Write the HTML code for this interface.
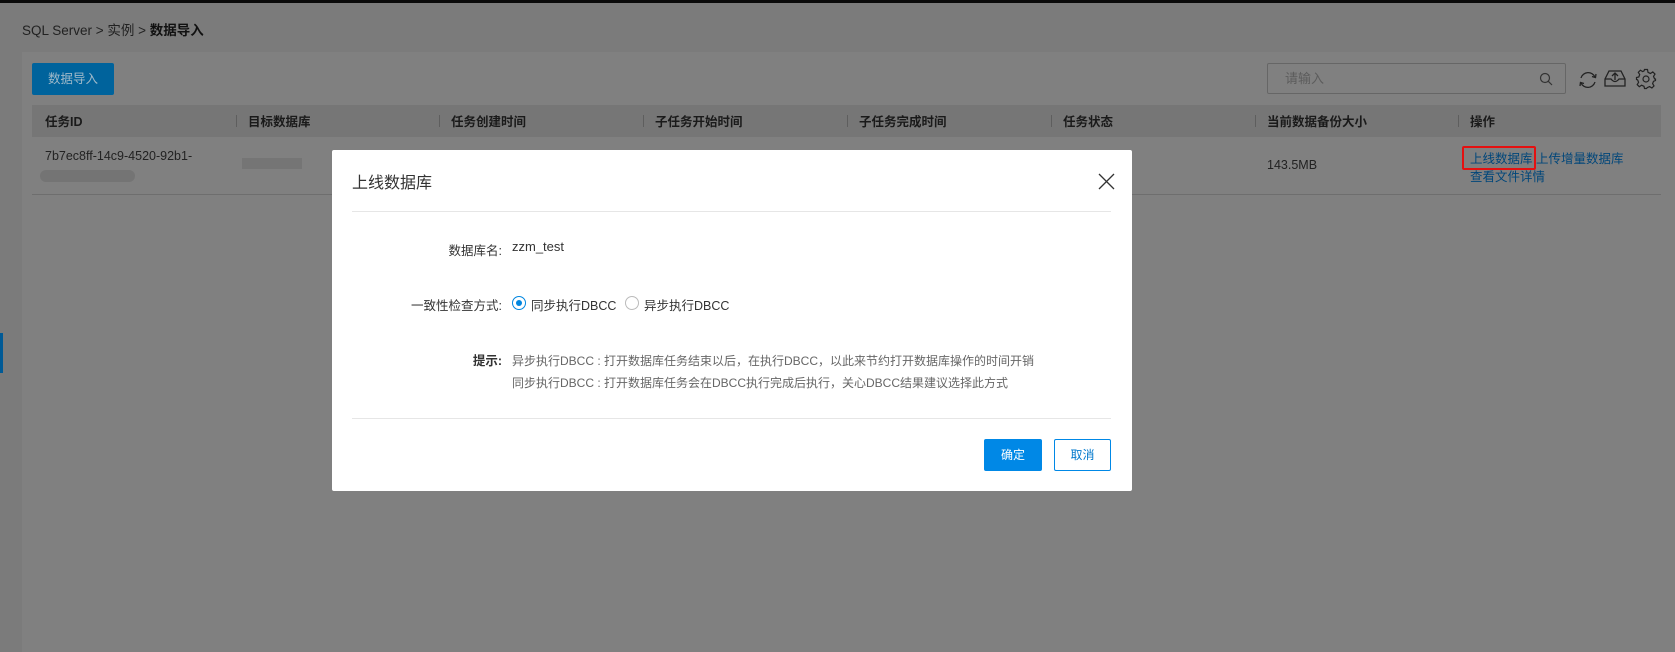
<!DOCTYPE html>
<html><head><meta charset="utf-8"><style>
*{margin:0;padding:0;box-sizing:border-box}
body{width:1675px;height:652px;overflow:hidden;background:#7b7b7b;font-family:"Liberation Sans","Noto Sans CJK SC",sans-serif;font-size:12px;color:#1e1e1e;position:relative}
.abs{position:absolute}
.top{left:0;top:0;width:1675px;height:3px;background:#0a0a0a}
.panel{left:22px;top:52px;width:1653px;height:600px;background:#808080}
.th{top:105px;left:32px;width:1629px;height:32px;background:#767676}
.th span{position:absolute;top:6px;font-weight:bold;font-size:12.5px;color:#1a1a1a}
.sep{position:absolute;top:10px;width:1px;height:12px;background:#5e5e5e}
.rowb{left:32px;top:194px;width:1629px;height:1px;background:#6e6e6e}
a{color:#00467a;text-decoration:none}
.modal{left:332px;top:150px;width:800px;height:341px;background:#fff;border-radius:2px}
.lbl{position:absolute;text-align:right;width:200px;left:-30px;color:#333;font-size:12.5px}
</style></head><body>
<div class="abs top"></div>
<div class="abs" style="left:0;top:333px;width:3px;height:40px;background:#005a96"></div>
<div class="abs" style="left:22px;top:19px;font-size:13.5px;color:#222">SQL Server &gt; 实例 &gt; <b style="color:#111">数据导入</b></div>
<div class="abs panel"></div>
<div class="abs" style="left:32px;top:63px;width:82px;height:32px;background:#00639c;border-radius:2px;color:#9fb9c9;font-size:12.5px;line-height:32px;text-align:center">数据导入</div>
<div class="abs" style="left:1267px;top:63px;width:299px;height:31px;border:1px solid #666;border-radius:2px;color:#5c5c5c;font-size:13px;line-height:29px;padding-left:17px">请输入
<svg class="abs" style="right:12px;top:8px" width="14" height="14" viewBox="0 0 14 14"><circle cx="6" cy="6" r="4.5" fill="none" stroke="#333" stroke-width="1.2"/><path d="M9.3 9.3L13 13" stroke="#333" stroke-width="1.2"/></svg></div>
<svg class="abs" style="left:1577px;top:69px" width="22" height="22" viewBox="0 0 22 22" fill="none" stroke="#222" stroke-width="1.3"><path d="M4 9A7.5 7.5 0 0 1 18 8"/><path d="M18 13A7.5 7.5 0 0 1 4 14"/><path d="M15 7.5L18.5 8.5L19 5"/><path d="M7 14.5L3.5 13.5L3 17"/></svg>
<svg class="abs" style="left:1603px;top:67px" width="24" height="22" viewBox="0 0 24 22" fill="none" stroke="#222" stroke-width="1.3"><path d="M2 12L6 4H18L22 12V19H2Z"/><path d="M2 12H8Q12 17 16 12H22"/><path d="M12 13V6M9 9L12 6L15 9"/></svg>
<svg class="abs" style="left:1635px;top:68px" width="22" height="22" viewBox="0 0 22 22" fill="none" stroke="#222" stroke-width="1.2"><circle cx="11" cy="11" r="3"/><path d="M9.5 1.5H12.5L13 4.3L15.5 5.5L17.8 3.9L20 6.1L18.5 8.4L19.6 10.9L20.5 11L20.5 12.5L18.5 13.3L17.6 15.6L19 17.9L16.9 20L14.6 18.6L12.3 19.6L11.5 20.5H9.5L9 18.3L6.6 17.2L4.3 18.7L2.2 16.6L3.6 14.3L2.6 11.9L1.5 11.5V9.5L3.8 9L4.7 6.6L3.3 4.3L5.4 2.2L7.7 3.6L9 3Z"/></svg>
<div class="abs th">
<span style="left:13px">任务ID</span>
<i class="sep" style="left:204px"></i><span style="left:216px">目标数据库</span>
<i class="sep" style="left:407px"></i><span style="left:419px">任务创建时间</span>
<i class="sep" style="left:611px"></i><span style="left:623px">子任务开始时间</span>
<i class="sep" style="left:815px"></i><span style="left:827px">子任务完成时间</span>
<i class="sep" style="left:1019px"></i><span style="left:1031px">任务状态</span>
<i class="sep" style="left:1223px"></i><span style="left:1235px">当前数据备份大小</span>
<i class="sep" style="left:1426px"></i><span style="left:1438px">操作</span>
</div>
<div class="abs" style="left:45px;top:149px;font-size:12.5px;color:#222">7b7ec8ff-14c9-4520-92b1-</div>
<div class="abs" style="left:40px;top:170px;width:95px;height:12px;background:#747474;border-radius:6px"></div>
<div class="abs" style="left:242px;top:158px;width:60px;height:11px;background:#757575"></div>
<div class="abs" style="left:1267px;top:158px;font-size:12.5px;color:#222">143.5MB</div>
<div class="abs" style="left:1462px;top:146px;width:74px;height:24px;border:2px solid #e51010;border-radius:2px"></div>
<div class="abs" style="left:1470px;top:150px;font-size:12.5px;line-height:18px"><a>上线数据库</a> <a>上传增量数据库</a><br><a>查看文件详情</a></div>
<div class="abs rowb"></div>

<div class="abs modal">
<div class="abs" style="left:20px;top:19px;font-size:16px;color:#333">上线数据库</div>
<svg class="abs" style="left:766px;top:23px" width="17" height="17" viewBox="0 0 17 17"><path d="M1 1L16 16M16 1L1 16" stroke="#333" stroke-width="1.3"/></svg>
<div class="abs" style="left:20px;top:61px;width:759px;height:1px;background:#e6e6e6"></div>
<div class="lbl" style="top:90px">数据库名:</div>
<div class="abs" style="left:180px;top:89px;color:#333;font-size:13px">zzm_test</div>
<div class="lbl" style="top:145px">一致性检查方式:</div>
<div class="abs" style="left:180px;top:146px;width:14px;height:14px;border:1px solid #0086e0;border-radius:50%"><div style="margin:3px;width:6px;height:6px;border-radius:50%;background:#0086e0"></div></div>
<div class="abs" style="left:199px;top:145px;color:#333;font-size:12.5px">同步执行DBCC</div>
<div class="abs" style="left:293px;top:146px;width:14px;height:14px;border:1px solid #bbb;border-radius:50%"></div>
<div class="abs" style="left:312px;top:145px;color:#333;font-size:12.5px">异步执行DBCC</div>
<div class="lbl" style="top:200px;font-weight:bold">提示:</div>
<div class="abs" style="left:180px;top:200px;color:#666;line-height:22px;font-size:12px">异步执行DBCC : 打开数据库任务结束以后，在执行DBCC，以此来节约打开数据库操作的时间开销<br>同步执行DBCC : 打开数据库任务会在DBCC执行完成后执行，关心DBCC结果建议选择此方式</div>
<div class="abs" style="left:20px;top:268px;width:759px;height:1px;background:#e6e6e6"></div>
<div class="abs" style="left:652px;top:289px;width:58px;height:32px;background:#0088e6;border-radius:2px;color:#fff;line-height:32px;text-align:center">确定</div>
<div class="abs" style="left:722px;top:289px;width:57px;height:32px;border:1px solid #0088e6;border-radius:2px;color:#0078cc;line-height:30px;text-align:center">取消</div>
</div>
</body></html>
